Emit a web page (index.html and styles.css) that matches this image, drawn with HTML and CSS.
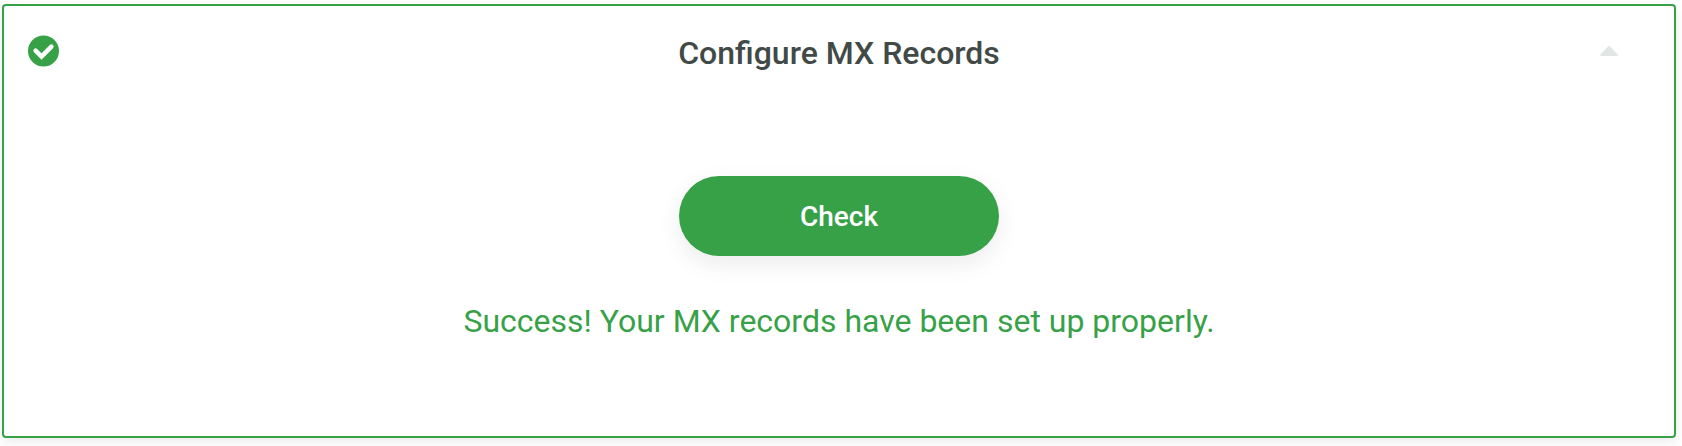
FILE: index.html
```html
<!DOCTYPE html>
<html lang="en">
<head>
    <meta charset="UTF-8">
    <meta name="viewport" content="width=device-width, initial-scale=1.0">
    <title>Configure MX Records</title>
    <link rel="stylesheet" href="styles.css">
</head>
<body>
    <section class="card">
        <header class="card-header">
            <svg class="status-icon" viewBox="0 0 32 32" role="img" aria-label="Done">
                <circle class="status-disc" cx="15.500" cy="16" r="15.500"/>
                <path class="status-tick" d="M7.600 15.700l5.900 5.900 9.900-9.900"/>
            </svg>
            <h2 class="card-title">Configure MX Records</h2>
            <button class="toggle" type="button" aria-label="Collapse">
                <svg class="caret" viewBox="0 0 18 10">
                    <path d="M1 10h16c1 0 1.300-.8.700-1.400L10 .5c-.6-.6-1.400-.6-2 0L.3 8.600C-.3 9.200 0 10 1 10z"/>
                </svg>
            </button>
        </header>
        <div class="card-body">
            <button class="check-button" type="button">Check</button>
            <p class="message">Success! Your MX records have been set up properly.</p>
        </div>
    </section>
</body>
</html>
```

FILE: styles.css
```css
* {
    box-sizing: border-box;
    margin: 0;
    padding: 0;
}
body {
    padding: 4px 6px 8px 2px;
    background: #ffffff;
    font-family: Roboto, Arial, sans-serif;
}
.card {
    border: 2px solid #37a148;
    border-radius: 4px;
    background: #ffffff;
    box-shadow: 0 4px 12px rgba(0,0,0,0.08);
}
.card-header {
    display: grid;
    grid-template-columns: 1fr auto 1fr;
    padding: 27px 24px 0;
}
.status-icon {
    width: 32px;
    height: 32px;
    margin-top: 2px;
}
.status-disc {
    fill: #37a148;
}
.status-tick {
    fill: none;
    stroke: #ffffff;
    stroke-width: 4.5;
    stroke-linecap: round;
}
.card-title {
    color: #414a47;
    font-size: 32px;
    font-weight: 500;
    line-height: 40px;
}
.toggle {
    justify-self: end;
    width: 36px;
    height: 36px;
    margin-right: 23px;
    border: none;
    background: none;
    cursor: pointer;
}
.caret {
    display: block;
    width: 18px;
    height: 10px;
    margin: 0 auto;
    fill: #e1e6e5;
}
.card-body {
    display: flex;
    flex-direction: column;
    align-items: center;
    gap: 45px;
    padding: 103px 24px 95px;
}
.check-button {
    width: 320px;
    height: 80px;
    border: none;
    border-radius: 40px;
    background: #37a148;
    box-shadow: 0 8px 24px rgba(0,0,0,0.08);
    color: #ffffff;
    font-family: inherit;
    font-size: 28px;
    font-weight: 500;
    cursor: pointer;
}
.message {
    color: #37a148;
    font-size: 32px;
    line-height: 40px;
    text-align: center;
}
```
